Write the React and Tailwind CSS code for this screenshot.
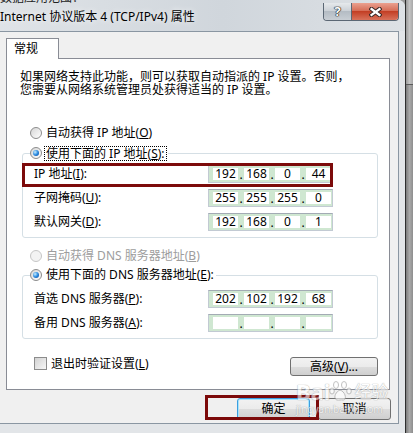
import React, { Fragment } from "react";

const F = "font-['Noto_Sans','Noto_Sans_CJK_SC',sans-serif]";

function Radio({ checked, disabled }) {
  return (
    <span
      className={
        disabled
          ? "w-[12px] h-[12px] rounded-full border border-[#c6c6c6] bg-[#f3f3f3] flex items-center justify-center shrink-0"
          : "w-[12px] h-[12px] rounded-full border border-[#8c8c8c] bg-[linear-gradient(135deg,#d6d6d6,#ffffff)] flex items-center justify-center shrink-0"
      }
    >
      {checked && (
        <span className="w-[6px] h-[6px] rounded-full bg-[radial-gradient(circle_at_35%_35%,#c8eeff,#2a8ae0_50%,#0b3f8f)]" />
      )}
    </span>
  );
}

function IPField({ vals }) {
  return (
    <div className="w-[125px] h-[18px] border border-[#c2cad3] border-t-[#a3abb4] bg-[#cfe7d1] flex items-center pl-[4px]">
      {vals.map((v, i) => (
        <Fragment key={i}>
          {i > 0 && (
            <span className="w-[6px] h-[12px] flex items-end justify-center leading-[11px] text-[12px]">.</span>
          )}
          <span className="w-[25px] h-[12px] bg-white flex items-center justify-center text-[12px] leading-[12px]">
            {v}
          </span>
        </Fragment>
      ))}
    </div>
  );
}

function Row({ label, vals }) {
  return (
    <div className="h-[24px] flex items-center pl-[11px]">
      <span className="w-[174px] whitespace-nowrap leading-[14px]">{label}</span>
      <IPField vals={vals} />
    </div>
  );
}

export default function App() {
  return (
    <div className={`relative w-[413px] h-[433px] overflow-hidden flex bg-[#9c9c9c] text-[12px] leading-none text-black ${F}`}>
      <div className="w-[405px] h-full flex flex-col bg-[#e2e5e8] rounded-tr-[7px]">
        {/* title bar */}
        <div className="h-[31px] flex items-start rounded-tr-[7px] bg-[linear-gradient(90deg,#dfe3e7,#d0d6dc_55%,#dde1e5)]">
          <div className="flex-1 flex flex-col">
            <div className="h-[4px] overflow-hidden">
              <div className="-mt-[8px] text-[12px] leading-[12px] text-[#222] whitespace-nowrap">数据应用范围：</div>
            </div>
            <div className="mt-[6px] leading-[14px] whitespace-nowrap [text-shadow:0_0_6px_#fff]">
              Internet 协议版本 4 (TCP/IPv4) 属性
            </div>
          </div>
          <div className="mt-[3px] mr-[6px] flex h-[18px] rounded-b-[4px] overflow-hidden border border-t-0 border-[#5b6774]">
            <div className="w-[28px] h-full border-r border-[#5b6774] bg-[linear-gradient(#e6e9ec,#c9cfd5_50%,#b4bcc4_50%,#c8ced4)] flex items-center justify-center">
              <span className="text-white font-bold text-[13px] leading-[13px] [text-shadow:0_0_1px_#222,0_0_1px_#222,0_0_1px_#222,0_0_1px_#222]">?</span>
            </div>
            <div className="w-[46px] h-full bg-[linear-gradient(#eaa08f,#d66e58_45%,#c33f25_50%,#d8725b)] flex items-center justify-center">
              <svg width="13" height="10" viewBox="0 0 13 10">
                <path d="M2.5 2 L10.5 8 M10.5 2 L2.5 8" stroke="#3b2a28" strokeWidth="4.2" strokeLinecap="square" fill="none" />
                <path d="M2.5 2 L10.5 8 M10.5 2 L2.5 8" stroke="#ffffff" strokeWidth="2.2" strokeLinecap="square" fill="none" />
              </svg>
            </div>
          </div>
        </div>

        {/* client */}
        <div className="w-[399px] h-[393px] flex flex-col bg-[#f0f0f0] border-t border-r border-b border-[#8a96a2]">
          <div className="mt-[6px] ml-[6px] w-[53px] h-[21px] -mb-[1px] relative z-10 bg-white border border-b-0 border-[#898c95] pl-[7px] flex items-center leading-[14px]">
            常规
          </div>
          <div className="ml-[6px] w-[384px] h-[332px] border border-[#898c95] bg-white flex flex-col">
            <div className="mt-[11px] ml-[13px] leading-[13px] whitespace-nowrap">
              <div>如果网络支持此功能，则可以获取自动指派的 IP 设置。否则，</div>
              <div>您需要从网络系统管理员处获得适当的 IP 设置。</div>
            </div>

            <div className="mt-[29px] ml-[23px] h-[16px] flex items-center gap-[4px]">
              <Radio />
              <span className="leading-[14px] whitespace-nowrap">
                自动获得 IP 地址(<u>O</u>)
              </span>
            </div>

            <fieldset className="mt-[4px] ml-[15px] w-[356px] border border-[#d5dfe5] rounded-[3px] pt-[1px] pb-[3px]">
              <legend className="ml-[7px] pr-[2px] h-[16px] flex items-center gap-[3px]">
                <Radio checked />
                <span className="leading-[13px] whitespace-nowrap px-[1px] outline-1 outline-dotted outline-black">
                  使用下面的 IP 地址(<u>S</u>):
                </span>
              </legend>
              <Row label={<>IP 地址(<u>I</u>):</>} vals={["192", "168", "0", "44"]} />
              <Row label={<>子网掩码(<u>U</u>):</>} vals={["255", "255", "255", "0"]} />
              <Row label={<>默认网关(<u>D</u>):</>} vals={["192", "168", "0", "1"]} />
            </fieldset>

            <div className="mt-[10px] ml-[23px] h-[16px] flex items-center gap-[4px]">
              <Radio disabled />
              <span className="leading-[14px] whitespace-nowrap text-[#9d9d9d]">
                自动获得 DNS 服务器地址(<u>B</u>)
              </span>
            </div>

            <fieldset className="mt-[3px] ml-[15px] w-[356px] border border-[#d5dfe5] rounded-[3px] pt-[4px] pb-[3px]">
              <legend className="ml-[7px] pr-[2px] h-[16px] flex items-center gap-[4px]">
                <Radio checked />
                <span className="leading-[14px] whitespace-nowrap">
                  使用下面的 DNS 服务器地址(<u>E</u>):
                </span>
              </legend>
              <Row label={<>首选 DNS 服务器(<u>P</u>):</>} vals={["202", "102", "192", "68"]} />
              <Row label={<>备用 DNS 服务器(<u>A</u>):</>} vals={["", "", "", ""]} />
            </fieldset>

            <div className="mt-[18px] flex items-start">
              <div className="flex-1 ml-[27px] flex items-center gap-[4px] h-[13px]">
                <span className="w-[13px] h-[13px] border border-[#8c8c8c] bg-[linear-gradient(135deg,#d2d2d2,#f7f7f7)] shrink-0" />
                <span className="leading-[14px] whitespace-nowrap">
                  退出时验证设置(<u>L</u>)
                </span>
              </div>
              <div className="mr-[11px] w-[88px] h-[19px] rounded-[3px] border border-[#707070] bg-[linear-gradient(#f2f2f2,#ebebeb_50%,#dddddd_50%,#cfcfcf)] flex items-center justify-center leading-[14px] whitespace-nowrap">
                高级(<u>V</u>)...
              </div>
            </div>
          </div>

          <div className="mt-[8px] pr-[7px] flex justify-end gap-[8px]">
            <div className="w-[73px] h-[22px] rounded-[3px] border border-[#3c9ee0] shadow-[inset_0_0_0_1px_#a8e4fb] bg-[linear-gradient(#f2f2f2,#ebebeb_50%,#dddddd_50%,#cfcfcf)] flex items-center justify-center leading-[14px]">
              确定
            </div>
            <div className="w-[73px] h-[22px] rounded-[3px] border border-[#707070] bg-[linear-gradient(#f2f2f2,#ebebeb_50%,#dddddd_50%,#cfcfcf)] flex items-center justify-center leading-[14px]">
              取消
            </div>
          </div>
        </div>
      </div>

      {/* right strip (background behind glass) */}
      <div className="w-[8px] h-full flex flex-col border-l border-[#2e2e2e]">
        <div className="h-[85px] border-b border-[#5a5a5a] bg-[linear-gradient(90deg,#9a9a9a,#c4c4c4_50%,#a8a8a8)]" />
        <div className="flex-1 bg-[linear-gradient(90deg,#7d7d7d,#a9a9a9_50%,#8e8e8e)]" />
      </div>

      {/* annotation boxes */}
      <div className="absolute left-[22px] top-[163px] w-[311px] h-[24px] border-[3px] border-[#7c0a0a]" />
      <div className="absolute left-[205px] top-[395px] w-[114px] h-[25px] border-[3px] border-[#7c0a0a]" />

      {/* watermark */}
      <div className="absolute left-[296px] top-[380px] opacity-60 text-white pointer-events-none">
        <div className="flex items-end">
          <span className="text-[22px] font-bold leading-[22px] [text-shadow:0_0_1px_#8a8a8a,0_0_1px_#8a8a8a]">Bai</span>
          <svg width="26" height="22" viewBox="0 0 26 22" className="-ml-[2px]">
            <g fill="#ffffff" stroke="#9a9a9a" strokeWidth="1">
              <ellipse cx="8" cy="5" rx="2.5" ry="3.5" />
              <ellipse cx="16" cy="5" rx="2.5" ry="3.5" />
              <ellipse cx="4" cy="11" rx="2.3" ry="3" />
              <ellipse cx="21" cy="11" rx="2.3" ry="3" />
              <path d="M12 10 C7 12 5 19 9 20 C11 20.5 13 19.5 15 20 C19 20.5 18 12 12 10 Z" />
            </g>
          </svg>
          <span className="text-[17px] leading-[20px] [text-shadow:0_0_1px_#8a8a8a,0_0_1px_#8a8a8a]">经验</span>
        </div>
        <div className="text-[10px] leading-[12px] mt-[1px] [text-shadow:0_0_1px_#8a8a8a,0_0_1px_#8a8a8a]">jingyan.baidu.com</div>
      </div>
    </div>
  );
}
